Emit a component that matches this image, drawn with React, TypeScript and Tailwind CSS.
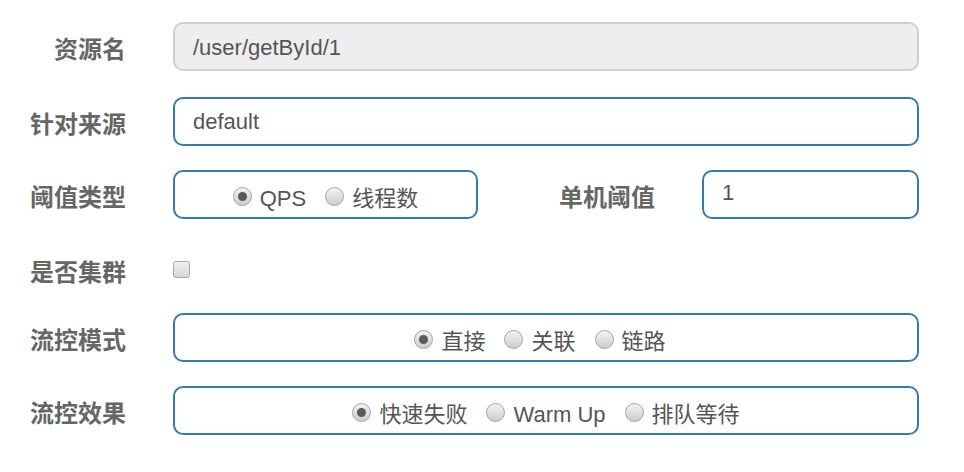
import React from "react";

const Radio: React.FC<{ label: string; checked?: boolean }> = ({ label, checked }) => (
  <span className="inline-flex items-center gap-[8px]">
    <span className="w-[19px] h-[19px] rounded-full border border-[#a5a5a5] bg-linear-to-b from-[#f3f3f3] to-[#cccccc] flex items-center justify-center">
      {checked && <span className="w-[9px] h-[9px] rounded-full bg-[#5a5a5a]" />}
    </span>
    <span className="pt-[3px]">{label}</span>
  </span>
);

const Label: React.FC<{ children: React.ReactNode }> = ({ children }) => (
  <div className="w-[126px] shrink-0 text-right pt-[6px] text-[24px] font-bold text-[#666]">{children}</div>
);

const box = "h-[49px] rounded-[10px] border-2 border-[#337ab7] bg-white";

export default function App() {
  return (
    <div className="w-[964px] h-[472px] bg-white pt-[22px] font-['Liberation_Sans','Noto_Sans_CJK_SC',sans-serif] text-[22px] text-[#555]">
      <div className="w-[919px]">
        {/* 资源名 */}
        <div className="flex items-center">
          <Label>资源名</Label>
          <div className="ml-[47px] w-[746px] h-[49px] rounded-[10px] border-2 border-[#cfcfcf] bg-[#eee] flex items-center pl-[18px] pt-[1px]">
            /user/getById/1
          </div>
        </div>

        {/* 针对来源 */}
        <div className="flex items-center mt-[26px]">
          <Label>针对来源</Label>
          <div className={`ml-[47px] w-[746px] ${box} flex items-center pl-[18px]`}>default</div>
        </div>

        {/* 阈值类型 + 单机阈值 */}
        <div className="flex items-center mt-[24px]">
          <Label>阈值类型</Label>
          <div className={`ml-[47px] w-[305px] ${box} flex items-center justify-center gap-[19px] pt-[4px]`}>
            <Radio label="QPS" checked />
            <Radio label="线程数" />
          </div>
          <div className="flex-1 text-right pt-[6px] text-[24px] font-bold text-[#666]">单机阈值</div>
          <div className={`ml-[47px] w-[217px] ${box} flex items-center pl-[18px] pb-[4px]`}>1</div>
        </div>

        {/* 是否集群 */}
        <div className="flex items-center mt-[27px] h-[48px]">
          <Label>是否集群</Label>
          <div className="ml-[47px] mb-[2px] w-[17px] h-[17px] rounded-[3px] border border-[#a9a9a9] bg-linear-to-b from-[#f2f2f2] to-[#d6d6d6]" />
        </div>

        {/* 流控模式 */}
        <div className="flex items-center mt-[19px]">
          <Label>流控模式</Label>
          <div className={`ml-[47px] w-[746px] ${box} flex items-center justify-center gap-[19px] pr-[12px] pt-[4px]`}>
            <Radio label="直接" checked />
            <Radio label="关联" />
            <Radio label="链路" />
          </div>
        </div>

        {/* 流控效果 */}
        <div className="flex items-center mt-[24px]">
          <Label>流控效果</Label>
          <div className={`ml-[47px] w-[746px] ${box} flex items-center justify-center gap-[19px] pt-[4px]`}>
            <Radio label="快速失败" checked />
            <Radio label="Warm Up" />
            <Radio label="排队等待" />
          </div>
        </div>
      </div>
    </div>
  );
}
